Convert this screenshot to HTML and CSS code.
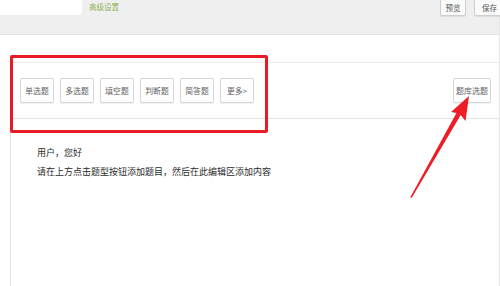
FILE: index.html
```html
<!DOCTYPE html>
<html lang="zh-CN">
<head>
<meta charset="utf-8">
<title>编辑</title>
<link rel="stylesheet" href="styles.css">
</head>
<body>
<div class="page">
  <header class="topbar">
    <div class="tab"></div>
    <div class="tab-label">高级设置</div>
    <div class="top-actions">
      <button class="top-btn">预览</button>
      <button class="top-btn">保存</button>
    </div>
  </header>
  <main class="panel">
    <div class="toolbar">
      <div class="types">
        <button class="qbtn">单选题</button>
        <button class="qbtn">多选题</button>
        <button class="qbtn">填空题</button>
        <button class="qbtn">判断题</button>
        <button class="qbtn">简答题</button>
        <button class="qbtn">更多&gt;</button>
      </div>
      <button class="qbtn bank">题库选题</button>
    </div>
    <div class="editor">
      <p>用户，您好</p>
      <p>请在上方点击题型按钮添加题目，然后在此编辑区添加内容</p>
    </div>
  </main>
  <div class="highlight"></div>
  <svg class="arrow" width="500" height="286" viewBox="0 0 500 286">
    <polygon points="410.2,197.5 411.8,197.8 461.6,113.6 457.4,111.2" fill="#ee1c25"/>
    <polygon points="469,96 451,112 459.5,113.5 465.5,121" fill="#ee1c25"/>
  </svg>
</div>
</body>
</html>
```
FILE: styles.css
```css
* { box-sizing: border-box; }
html, body { margin: 0; padding: 0; }
body {
  width: 500px;
  height: 286px;
  overflow: hidden;
  background: #fff;
  font-family: "Noto Sans CJK SC", "Noto Sans", sans-serif;
  color: #333;
}
.page {
  position: relative;
  width: 500px;
  height: 286px;
  border-right: 1px solid #e4e4e4;
}
.topbar {
  height: 35px;
  background: #efefef;
  border-bottom: 1px solid #e2e2e2;
  display: flex;
  align-items: flex-start;
}
.tab {
  width: 82px;
  height: 15px;
  background: #fff;
  border-bottom-right-radius: 4px;
}
.tab-label {
  margin-left: 7px;
  margin-top: 1px;
  font-size: 7.5px;
  line-height: 11px;
  color: #8fb35b;
}
.top-actions {
  margin-left: auto;
  display: flex;
  gap: 8px;
  margin-top: -3px;
  margin-right: -6px;
}
.top-btn {
  width: 26px;
  height: 19px;
  padding: 0;
  padding-top: 2px;
  font-family: inherit;
  font-size: 7.5px;
  color: #555;
  background: #fafafa;
  border: 1px solid #cfcfcf;
  border-radius: 2px;
  box-shadow: 0 1px 1px rgba(0,0,0,0.08);
}
.top-actions .top-btn:last-child { width: 31px; }
.panel {
  margin-top: 27px;
  margin-left: 10px;
  height: 224px;
  border-top: 1px solid #ececec;
  border-left: 1px solid #e2e2e2;
}
.toolbar {
  height: 56px;
  border-bottom: 1px solid #e2e2e2;
  display: flex;
  align-items: center;
  justify-content: space-between;
  padding-left: 9px;
  padding-right: 8px;
}
.types {
  display: flex;
  gap: 6px;
}
.qbtn {
  width: 34px;
  height: 25px;
  padding: 0;
  font-family: inherit;
  font-size: 7.8px;
  color: #5f5f5f;
  background: #fff;
  border: 1px solid #d6d6d6;
  border-radius: 2px;
  box-shadow: 0 1px 1px rgba(0,0,0,0.06);
}
.qbtn.bank {
  width: 38px;
  font-size: 8px;
}
.editor {
  padding-top: 24px;
  padding-left: 26px;
  font-size: 9px;
  line-height: 19px;
  color: #2a2a2a;
}
.editor p { margin: 0; }
.highlight {
  position: absolute;
  left: 10px;
  top: 55px;
  width: 258px;
  height: 78px;
  border: 3.5px solid #e81b26;
  border-radius: 2px;
}
.arrow {
  position: absolute;
  left: 0;
  top: 0;
}
```
